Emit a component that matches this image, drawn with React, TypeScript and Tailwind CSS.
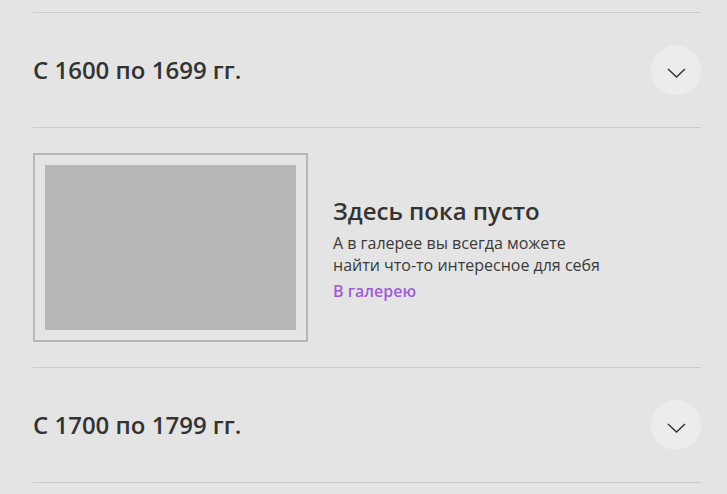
import { ReactNode } from "react";

function Chevron() {
  return (
    <svg width="19" height="10" viewBox="0 0 19 10" fill="none" className="mt-[5px]">
      <polyline points="1,1 9.5,9 18,1" stroke="#2f2f2f" strokeWidth="1.4" />
    </svg>
  );
}

function PeriodRow({ title }: { title: string }) {
  return (
    <div className="border-t border-[#c9c9c9] h-[115px] flex items-center justify-between">
      <h2 className="text-[24px] font-semibold text-[#333333]">{title}</h2>
      <button className="w-[50px] h-[50px] rounded-full bg-[#ececec] flex items-center justify-center">
        <Chevron />
      </button>
    </div>
  );
}

function Panel({ children }: { children: ReactNode }) {
  return <div className="border-t border-[#c9c9c9] pt-[25px] pb-[25px]">{children}</div>;
}

function App() {
  return (
    <div
      className="min-h-screen bg-[#e4e4e4] pt-3 pl-[33px] pr-[26px]"
      style={{ fontFamily: '"Open Sans", "Noto Sans", sans-serif' }}
    >
      <PeriodRow title="С 1600 по 1699 гг." />
      <Panel>
        <div className="flex items-center gap-[25px]">
          <div className="w-[275px] h-[189px] border-2 border-[#b7b7b7] p-[10px]">
            <div className="w-full h-full bg-[#b7b7b7]" />
          </div>
          <div className="flex flex-col pt-[3px]">
            <h3 className="text-[24px] font-semibold text-[#333333] leading-[30px]">Здесь пока пусто</h3>
            <p className="text-[16px] text-[#3a3a3a] leading-[22px] mt-[6px]">
              А в галерее вы всегда можете
              <br />
              найти что-то интересное для себя
            </p>
            <a href="#" className="text-[16px] font-semibold text-[#a05cd6] leading-[22px] mt-[4px]">
              В галерею
            </a>
          </div>
        </div>
      </Panel>
      <PeriodRow title="С 1700 по 1799 гг." />
      <div className="border-t border-[#c9c9c9]" />
    </div>
  );
}

export default App;
